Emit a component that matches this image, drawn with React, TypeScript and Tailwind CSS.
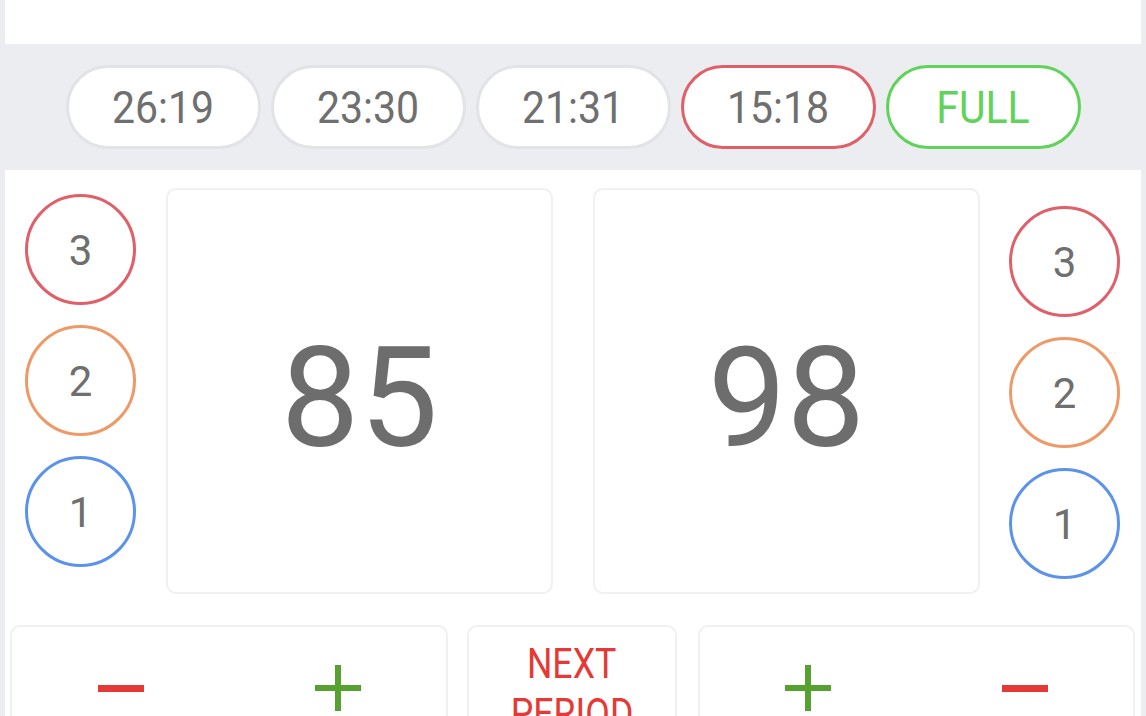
import React from "react"

const font = { fontFamily: "Roboto, 'Noto Sans', sans-serif" }

type Pill = { label: string; tone: "plain" | "red" | "green" }

const pills: Pill[] = [
  { label: "26:19", tone: "plain" },
  { label: "23:30", tone: "plain" },
  { label: "21:31", tone: "plain" },
  { label: "15:18", tone: "red" },
  { label: "FULL", tone: "green" },
]

const pillClass = {
  plain: "border-[#e2e3e6] text-[#6f6f6f]",
  red: "border-[#e0606a] text-[#6f6f6f]",
  green: "border-[#5fd35a] text-[#5fd35a]",
}

const PointCircles: React.FC<{ className?: string }> = ({ className }) => (
  <div className={`flex flex-col gap-[20px] ${className ?? ""}`}>
    <div className="w-[111px] h-[111px] rounded-full border-[3px] border-[#e0606a] flex items-center justify-center pt-[2px] text-[42px] text-[#6f6f6f]">
      3
    </div>
    <div className="w-[111px] h-[111px] rounded-full border-[3px] border-[#ee9a68] flex items-center justify-center pt-[2px] text-[42px] text-[#6f6f6f]">
      2
    </div>
    <div className="w-[111px] h-[111px] rounded-full border-[3px] border-[#5b93ec] flex items-center justify-center pt-[2px] text-[42px] text-[#6f6f6f]">
      1
    </div>
  </div>
)

const Minus = () => <div className="w-[46px] h-[7px] bg-[#e53935]" />

const Plus = () => (
  <div className="relative w-[46px] h-[46px]">
    <div className="absolute left-0 top-[20px] w-[46px] h-[6px] bg-[#56a12f]" />
    <div className="absolute top-0 left-[20px] w-[6px] h-[46px] bg-[#56a12f]" />
  </div>
)

export default function App() {
  return (
    <div style={font} className="w-[1146px] h-[716px] overflow-hidden bg-[#ebedf0] px-[5px]">
      <div className="h-[44px] bg-white" />

      <div className="h-[126px] flex items-center justify-center gap-[10px]">
        {pills.map((p) => (
          <div
            key={p.label}
            className={`w-[195px] h-[84px] rounded-full bg-white border-[3px] flex items-center justify-center pt-[4px] text-[41px] ${pillClass[p.tone]}`}
          >
            <span className="scale-y-[1.1]">{p.label}</span>
          </div>
        ))}
      </div>

      <div className="bg-white h-[546px] pt-[18px]">
        <div className="flex items-start">
          <PointCircles className="ml-[20px] mt-[6px]" />
          <div className="ml-[30px] w-[387px] h-[406px] rounded-[10px] border-2 border-[#f0f0f0] flex items-center justify-center pt-[14px] text-[140px] text-[#6d6d6d]">
            85
          </div>
          <div className="ml-[40px] w-[387px] h-[406px] rounded-[10px] border-2 border-[#f0f0f0] flex items-center justify-center pt-[14px] text-[140px] text-[#6d6d6d]">
            98
          </div>
          <PointCircles className="ml-[29px] mt-[18px]" />
        </div>

        <div className="flex items-start mt-[31px] px-[5px] gap-[19px]">
          <div className="w-[438px] h-[130px] rounded-[10px] border-2 border-[#f0f0f0] flex items-start justify-around pt-[38px]">
            <div className="h-[46px] flex items-center"><Minus /></div>
            <Plus />
          </div>
          <div className="w-[210px] h-[130px] rounded-[10px] border-2 border-[#f0f0f0] flex flex-col items-center pt-[12px] text-[#e53935] text-[42px] leading-[50px]">
            <span className="scale-x-[0.85]">NEXT</span>
            <span className="scale-x-[0.85]">PERIOD</span>
          </div>
          <div className="ml-[2px] w-[437px] h-[130px] rounded-[10px] border-2 border-[#f0f0f0] flex items-start justify-around pt-[38px]">
            <Plus />
            <div className="h-[46px] flex items-center"><Minus /></div>
          </div>
        </div>
      </div>
    </div>
  )
}
